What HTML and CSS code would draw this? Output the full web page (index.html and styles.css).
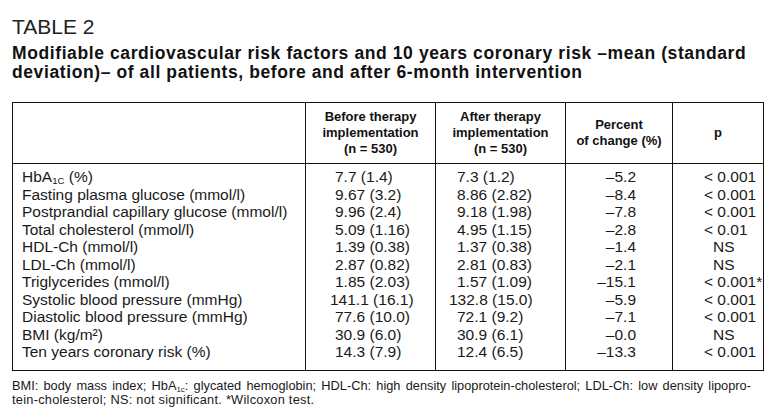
FILE: index.html
```html
<!DOCTYPE html>
<html lang="en">
<head>
<meta charset="utf-8">
<title>Table 2</title>
<link rel="stylesheet" href="styles.css">
</head>
<body>
<div class="page">
  <h1 class="label">TABLE 2</h1>
  <h2 class="caption">Modifiable cardiovascular risk factors and 10 years coronary risk –mean (standard<br>deviation)– of all patients, before and after 6-month intervention</h2>
  <table class="data">
    <colgroup>
      <col class="c1"><col class="c2"><col class="c3"><col class="c4"><col class="c5">
    </colgroup>
    <thead>
      <tr>
        <th></th>
        <th>Before therapy<br>implementation<br>(n = 530)</th>
        <th>After therapy<br>implementation<br>(n = 530)</th>
        <th>Percent<br>of change (%)</th>
        <th>p</th>
      </tr>
    </thead>
    <tbody>
      <tr class="first"><td>HbA<sub>1C</sub> (%)</td><td class="v2">7.7 (1.4)</td><td class="v3">7.3 (1.2)</td><td class="pc">–5.2</td><td class="p">&lt; 0.001</td></tr>
      <tr><td>Fasting plasma glucose (mmol/l)</td><td class="v2">9.67 (3.2)</td><td class="v3">8.86 (2.82)</td><td class="pc">–8.4</td><td class="p">&lt; 0.001</td></tr>
      <tr><td>Postprandial capillary glucose (mmol/l)</td><td class="v2">9.96 (2.4)</td><td class="v3">9.18 (1.98)</td><td class="pc">–7.8</td><td class="p">&lt; 0.001</td></tr>
      <tr><td>Total cholesterol (mmol/l)</td><td class="v2">5.09 (1.16)</td><td class="v3">4.95 (1.15)</td><td class="pc">–2.8</td><td class="p">&lt; 0.01</td></tr>
      <tr><td>HDL-Ch (mmol/l)</td><td class="v2">1.39 (0.38)</td><td class="v3">1.37 (0.38)</td><td class="pc">–1.4</td><td class="p ns">NS</td></tr>
      <tr><td>LDL-Ch (mmol/l)</td><td class="v2">2.87 (0.82)</td><td class="v3">2.81 (0.83)</td><td class="pc">–2.1</td><td class="p ns">NS</td></tr>
      <tr><td>Triglycerides (mmol/l)</td><td class="v2">1.85 (2.03)</td><td class="v3">1.57 (1.09)</td><td class="pc">–15.1</td><td class="p">&lt; 0.001*</td></tr>
      <tr><td>Systolic blood pressure (mmHg)</td><td class="v2 wide">141.1 (16.1)</td><td class="v3 wide">132.8 (15.0)</td><td class="pc">–5.9</td><td class="p">&lt; 0.001</td></tr>
      <tr><td>Diastolic blood pressure (mmHg)</td><td class="v2">77.6 (10.0)</td><td class="v3">72.1 (9.2)</td><td class="pc">–7.1</td><td class="p">&lt; 0.001</td></tr>
      <tr><td>BMI (kg/m²)</td><td class="v2">30.9 (6.0)</td><td class="v3">30.9 (6.1)</td><td class="pc">–0.0</td><td class="p ns">NS</td></tr>
      <tr class="last"><td>Ten years coronary risk (%)</td><td class="v2">14.3 (7.9)</td><td class="v3">12.4 (6.5)</td><td class="pc">–13.3</td><td class="p">&lt; 0.001</td></tr>
    </tbody>
  </table>
  <div class="notes">
    <p class="note-line justify">BMI: body mass index; HbA<sub>1c</sub>: glycated hemoglobin; HDL-Ch: high density lipoprotein-cholesterol; LDL-Ch: low density lipopro-</p>
    <p class="note-line wide">tein-cholesterol; NS: not significant. *Wilcoxon test.</p>
  </div>
</div>
</body>
</html>
```

FILE: styles.css
```css
html, body {
  margin: 0;
  padding: 0;
  background: #ffffff;
}

body {
  font-family: "Liberation Sans", Arial, sans-serif;
  color: #1a1a1a;
}

.page {
  padding: 15px 14px 0 12px;
}

.label {
  margin: 0;
  font-size: 21px;
  line-height: 24px;
  font-weight: normal;
  color: #222;
}

.caption {
  margin: 5px 0 0 0;
  font-size: 17.5px;
  line-height: 19px;
  letter-spacing: 0.6px;
  font-weight: bold;
  color: #111;
  white-space: nowrap;
}

.data {
  margin-top: 20px;
  width: 751px;
  border-collapse: collapse;
  table-layout: fixed;
  border: 1px solid #111;
}

.c1 { width: 293px; }
.c2 { width: 130px; }
.c3 { width: 130px; }
.c4 { width: 107px; }
.c5 { width: 91px; }

.data th {
  border: 1px solid #111;
  font-size: 13px;
  line-height: 16px;
  font-weight: bold;
  text-align: center;
  vertical-align: middle;
  height: 48px;
  padding: 6px 4px 6px 4px;
  color: #111;
}

.data td {
  border-left: 1px solid #111;
  border-right: 1px solid #111;
  font-size: 15.5px;
  line-height: 17.5px;
  height: 17.5px;
  padding: 0;
  white-space: nowrap;
  color: #1a1a1a;
}

.data td:first-child {
  padding-left: 9px;
}

.data tr.first td {
  padding-top: 4px;
}

.data tr.last td {
  padding-bottom: 9px;
}

.data td.v2 {
  padding-left: 29px;
}

.data td.v3 {
  padding-left: 21px;
}

.data td.v2.wide {
  padding-left: 24px;
}

.data td.v3.wide {
  padding-left: 13px;
}

.data td.pc {
  text-align: right;
  padding-right: 36px;
}

.data td.p {
  padding-left: 31px;
}

.data td.p.ns {
  padding-left: 40px;
}

sub {
  font-size: 0.62em;
  vertical-align: -0.2em;
  line-height: 0;
}

.notes {
  margin-top: 8px;
  width: 739px;
}

.note-line {
  margin: 0;
  font-size: 12.8px;
  line-height: 14.5px;
  color: #1a1a1a;
  white-space: nowrap;
}

.note-line.justify {
  text-align: justify;
  text-align-last: justify;
}

.note-line.wide {
  letter-spacing: 0.25px;
}
```
